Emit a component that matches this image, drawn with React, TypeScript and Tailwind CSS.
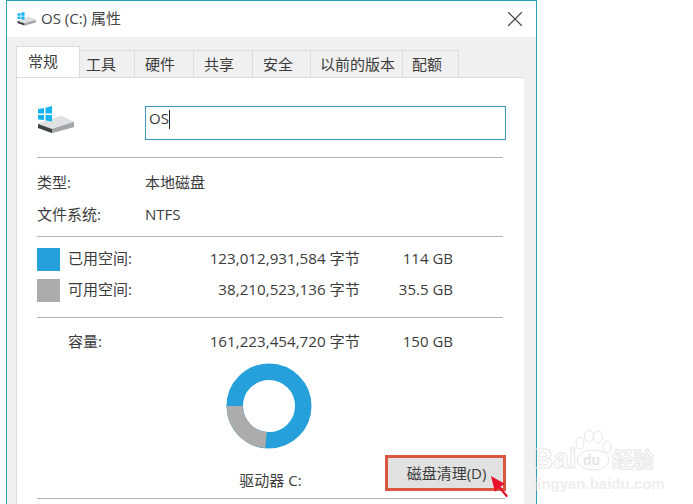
import { X } from 'lucide-react';

const TABS = [
  { label: '工具', width: 'w-[55px] pl-[6px]' },
  { label: '硬件', width: 'w-[59px] pl-[10px]' },
  { label: '共享', width: 'w-[59px] pl-[10px]' },
  { label: '安全', width: 'w-[58px] pl-[10px]' },
  { label: '以前的版本', width: 'w-[92px] pl-[9px]' },
  { label: '配额', width: 'w-[56px] pl-[9px]' },
];

function DriveIcon({ className }: { className: string }) {
  return (
    <svg viewBox="0 0 38 28" className={className}>
      <path d="M1 18 L24 10 L37 16 L37 21 L15 27 L1 22 Z" fill="#b9bcbf" />
      <path d="M1 18 L24 10 L37 16 L15 23 Z" fill="#dfe1e3" />
      <path d="M1 18 L15 23 L15 27 L1 22 Z" fill="#3f4447" />
      <path d="M15 23 L37 16 L37 21 L15 27 Z" fill="#a3a7aa" />
      <path d="M1 3 L7 2 L7 7.500 L1 7.500 Z M8.500 1.700 L15 0 L15 7.500 L8.500 7.500 Z M1 9 L7 9 L7 14 L1 13.500 Z M8.500 9 L15 9 L15 15.500 L8.500 14.500 Z" fill="#16b4ee" />
    </svg>
  );
}

function Divider({ className }: { className: string }) {
  return <div className={`h-px bg-[#b4b4b4] ${className}`} />;
}

function SizeRow({ swatch, label, bytes, size, className }: { swatch: string; label: string; bytes: string; size: string; className: string }) {
  return (
    <div className={`flex items-center h-[23px] ${className}`}>
      <div className={`w-[23px] h-[23px] ${swatch}`} />
      <div className="w-[85px] pl-[8px] pb-[3px] whitespace-nowrap">{label}</div>
      <div className="w-[215px] pb-[3px] text-right text-[15.200px] whitespace-nowrap">{bytes}</div>
      <div className="w-[93px] pb-[3px] text-right">{size}</div>
    </div>
  );
}

export default function App() {
  return (
    <div className="relative h-[504px] w-[693px] overflow-hidden bg-white text-[15px] leading-[18px] text-[#3c3c3c] font-['Open_Sans','Noto_Sans_CJK_SC',sans-serif]">
      <div className="ml-[6px] flex h-[504px] w-[531px] flex-col border-x border-t border-[#2a9fb5]">
        <div className="flex h-[36px] shrink-0 items-center bg-white pl-[10px] pr-[8px]">
          <DriveIcon className="h-[14px] w-[19px]" />
          <span className="ml-[5px] pb-[2px] text-[#444]">OS (C:) 属性</span>
          <X className="ml-auto h-[26px] w-[26px] text-[#444]" strokeWidth={1} />
        </div>
        <div className="flex flex-1 flex-col bg-[#f0f0f0] pl-[9px] pr-[12px]">
          <div className="flex h-[40px] shrink-0 items-end">
            <div className="z-10 flex h-[31px] w-[64px] items-center border-x border-t border-[#dcdcdc] bg-white pl-[11px] pb-[2px]">常规</div>
            {TABS.map((tab) => (
              <div key={tab.label} className={`flex h-[27px] items-center border-t border-r border-[#dcdcdc] bg-[#f0f0f0] whitespace-nowrap ${tab.width}`}>
                {tab.label}
              </div>
            ))}
          </div>
          <div className="flex-1 border-t border-l border-[#dcdcdc] bg-white pl-[20px] pr-[18px]">
            <div className="flex h-[79px] items-start pt-[28px]">
              <DriveIcon className="h-[28px] w-[38px]" />
              <div className="ml-[70px] flex h-[34px] w-[361px] items-start border border-[#3f97c4] pl-[3px] pt-[2px]">
                OS<span className="mt-[1px] h-[19px] w-[1.500px] bg-[#222]" />
              </div>
            </div>
            <Divider className="w-[466px]" />
            <div className="flex h-[20px] mt-[15px]"><div className="w-[108px]">类型:</div><div>本地磁盘</div></div>
            <div className="flex h-[20px] mt-[12px]"><div className="w-[108px]">文件系统:</div><div>NTFS</div></div>
            <Divider className="mt-[11px] w-[466px]" />
            <SizeRow className="mt-[11px]" swatch="bg-[#26a0da]" label="已用空间:" bytes="123,012,931,584 字节" size="114 GB" />
            <SizeRow className="mt-[8px]" swatch="bg-[#acacac]" label="可用空间:" bytes="38,210,523,136 字节" size="35.5 GB" />
            <Divider className="mt-[15px] w-[466px]" />
            <div className="mt-[14px] flex h-[20px]">
              <div className="w-[108px] pl-[31px]">容量:</div>
              <div className="w-[215px] text-right text-[15.200px] whitespace-nowrap">161,223,454,720 字节</div>
              <div className="w-[93px] text-right">150 GB</div>
            </div>
            <div className="flex h-[146px]">
              <div className="flex w-[350px] flex-col items-center pl-[116px] pt-[11px]">
                <svg viewBox="0 0 86 86" className="h-[86px] w-[86px] shrink-0">
                  <circle cx="43" cy="43" r="34.250" fill="none" stroke="#26a0da" strokeWidth="16.500" />
                  <path d="M8.750 43 A34.250 34.250 0 0 0 40 77.100" fill="none" stroke="#acacac" strokeWidth="16.500" />
                </svg>
                <div className="mt-[22px] ml-[3px] whitespace-nowrap">驱动器 C:</div>
              </div>
              <div className="mt-[103px] flex h-[36px] w-[121px] shrink-0 items-center justify-center border-[3px] border-[#d9573f] bg-[#e1e1e1] pl-[2px] whitespace-nowrap">磁盘清理(D)</div>
            </div>
            <Divider className="w-[468px]" />
          </div>
        </div>
      </div>
      <svg viewBox="0 0 20 24" className="absolute left-[490px] top-[475px] h-[24px] w-[20px]">
        <path d="M1 1 L15 9 L10.500 11.500 L18 21 L16.500 22.500 L8.500 13 L5 17 Z" fill="#e8112d" />
      </svg>
      <div className="absolute left-[533px] top-[428px] h-[66px] w-[130px] text-transparent">
        <svg viewBox="0 0 40 42" className="absolute left-[41px] top-[1px] h-[42px] w-[40px]" fill="none" stroke="#e6e6e6">
          <ellipse cx="6" cy="14" rx="4" ry="6" />
          <ellipse cx="15" cy="7" rx="4.500" ry="6" />
          <ellipse cx="24" cy="8" rx="4.500" ry="6" />
          <ellipse cx="33" cy="18" rx="4" ry="6" />
          <ellipse cx="19" cy="31" rx="16" ry="10" />
        </svg>
        <div className="absolute left-[0px] top-[15px] text-[28px] leading-[32px] font-bold font-['Liberation_Sans',sans-serif] [-webkit-text-stroke:1px_#e8e8e8]">Bai</div>
        <div className="absolute left-[50px] top-[22px] text-[14px] leading-[20px] font-bold text-[#e4e4e4] font-['Liberation_Sans',sans-serif]">du</div>
        <div className="absolute left-[79px] top-[17px] text-[21px] leading-[28px] font-bold [-webkit-text-stroke:1px_#e8e8e8]">经验</div>
        <div className="absolute left-[0px] top-[47px] whitespace-nowrap text-[15px] leading-[18px] font-bold text-[#eeeeee] font-['Liberation_Sans',sans-serif]">jingyan.baidu.com</div>
      </div>
    </div>
  );
}
